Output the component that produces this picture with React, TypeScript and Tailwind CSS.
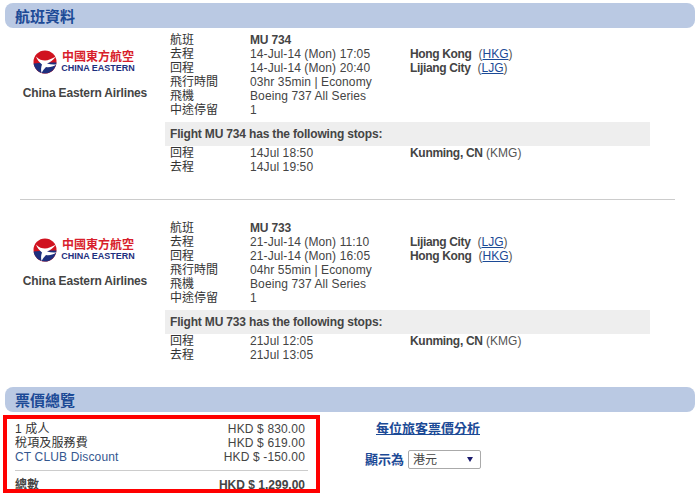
const font = "font-['Liberation_Sans','Noto_Sans_CJK_TC',sans-serif]";

function Header({ title }: { title: string }) {
  return (
    <div className="mx-[5px] h-[25px] w-[690px] rounded-[8px] bg-[#bac9e3] pl-[10px] text-[15px] leading-[28px] font-bold text-[#1c4a96]">
      {title}
    </div>
  );
}

function Logo() {
  return (
    <div className="flex items-center pl-[13px]">
      <svg width="24" height="24" viewBox="0 0 24 24" className="shrink-0">
        <circle cx="12" cy="12" r="11.5" fill="#d0121f" />
        <path d="M0.6 13.5 C1.5 19.5 6.5 23.5 12 23.5 C17.5 23.5 22.5 19.5 23.5 12.5 L12 12.5Z" fill="#1d2f7e" />
        <path d="M3 6.5 C6 9.5 9 10.5 12 10.5 C15 10.5 19 8.5 23 6.5 C20 10 17 12.5 14 13.5 C17 14.5 20 14.8 23.4 14.5 C20 17 16 17.5 13 17 C11 19 9.5 21 8.5 23 C7.8 20 8 17 9 14.5 C6.5 12.5 4 9.5 3 6.5Z" fill="#fff" />
      </svg>
      <div className="ml-[5px] flex w-[72px] flex-col items-center">
        <div className="text-[12px] leading-[12px] font-bold whitespace-nowrap text-[#d81e2c]">中國東方航空</div>
        <div className="text-[9px] leading-[11px] font-bold whitespace-nowrap text-[#1d2f7e]">CHINA EASTERN</div>
      </div>
    </div>
  );
}

function Row({ label, value, right, bold }: { label: string; value: string; right?: React.ReactNode; bold?: boolean }) {
  return (
    <div className="flex h-[14px] leading-[14px]">
      <div className="w-[80px] text-[#333]">{label}</div>
      <div className={`w-[160px] whitespace-nowrap ${bold ? "font-bold tracking-[-0.15px]" : "tracking-[0.1px]"}`}>{value}</div>
      <div className="whitespace-nowrap">{right}</div>
    </div>
  );
}

function City({ name, code }: { name: string; code: string }) {
  return (
    <>
      <span className="font-bold tracking-[-0.35px]">{name}</span>
      <span className="ml-[7px] text-[#555]">
        (<a className="text-[#1c4a96] underline">{code}</a>)
      </span>
    </>
  );
}

function Flight({ no, dep, arr, a, b, dur, stopIn, stopOut }: { no: string; dep: string; arr: string; a: React.ReactNode; b: React.ReactNode; dur: string; stopIn: string; stopOut: string }) {
  return (
    <div className="flex">
      <div className="w-[165px] pl-[20px] pt-[17px]">
        <div className="w-[130px]">
          <Logo />
          <div className="mt-[12px] text-center leading-[14px] font-bold tracking-[-0.15px] whitespace-nowrap">China Eastern Airlines</div>
        </div>
      </div>
      <div className="w-[485px]">
        <div className="pl-[5px]">
          <Row label="航班" value={no} bold />
          <Row label="去程" value={dep} right={a} />
          <Row label="回程" value={arr} right={b} />
          <Row label="飛行時間" value={dur} />
          <Row label="飛機" value="Boeing 737 All Series" />
          <Row label="中途停留" value="1" />
        </div>
        <div className="mt-[5px] h-[24px] bg-[#eeeeee] pl-[5px] leading-[24px] font-bold tracking-[-0.17px]">
          Flight {no} has the following stops:
        </div>
        <div className="pl-[5px]">
          <Row label="回程" value={stopIn} right={<><span className="font-bold tracking-[-0.3px]">Kunming, CN</span> <span className="text-[#555]">(KMG)</span></>} />
          <Row label="去程" value={stopOut} />
        </div>
      </div>
    </div>
  );
}

function Price({ label, value, blue }: { label: string; value: string; blue?: boolean }) {
  return (
    <div className="flex h-[14px] justify-between pr-[3px] leading-[14px] tracking-[0.15px]">
      <span className={blue ? "text-[#34578f]" : "text-[#333]"}>{label}</span>
      <span>{value}</span>
    </div>
  );
}

export default function App() {
  return (
    <div className={`${font} h-[495px] w-[698px] overflow-hidden bg-white pt-[3px] text-[12px] text-[#444]`}>
      <Header title="航班資料" />
      <div className="pt-[5px]">
        <Flight no="MU 734" dep="14-Jul-14 (Mon) 17:05" arr="14-Jul-14 (Mon) 20:40" a={<City name="Hong Kong" code="HKG" />} b={<City name="Lijiang City" code="LJG" />} dur="03hr 35min | Economy" stopIn="14Jul 18:50" stopOut="14Jul 19:50" />
      </div>
      <div className="mx-[20px] mt-[25px] mb-[21px] h-px w-[655px] bg-[#cccccc]" />
      <Flight no="MU 733" dep="21-Jul-14 (Mon) 11:10" arr="21-Jul-14 (Mon) 16:05" a={<City name="Lijiang City" code="LJG" />} b={<City name="Hong Kong" code="HKG" />} dur="04hr 55min | Economy" stopIn="21Jul 12:05" stopOut="21Jul 13:05" />
      <div className="mt-[25px]">
        <Header title="票價總覽" />
      </div>
      <div className="flex pt-[3px] pl-[3px]">
        <div className="h-[78px] w-[317px] overflow-hidden border-[4px] border-[#ff0000] px-[8px] pt-[3px]">
          <Price label="1 成人" value="HKD $ 830.00" />
          <Price label="稅項及服務費" value="HKD $ 619.00" />
          <Price label="CT CLUB Discount" value="HKD $ -150.00" blue />
          <div className="mt-[6px] mb-[7px] h-px bg-[#cccccc]" />
          <div className="flex h-[14px] justify-between pr-[3px] leading-[14px] font-bold">
            <span>總數</span>
            <span>HKD $ 1,299.00</span>
          </div>
        </div>
        <div className="ml-[46px] flex w-[115px] flex-col items-end pt-[6px] font-bold text-[#1c4a96]">
          <a className="mr-[1px] text-[13px] leading-[16px] whitespace-nowrap underline">每位旅客票價分析</a>
          <div className="mt-[13px] flex items-center gap-[4px] text-[13px] whitespace-nowrap">
            <span>顯示為</span>
            <div className="flex h-[19px] w-[73px] items-center justify-between rounded-[2px] border border-[#aaaaaa] pr-[7px] pl-[4px] text-[12px] font-normal text-[#444]">
              <span>港元</span>
              <span className="h-0 w-0 border-x-[3px] border-t-[5px] border-x-transparent border-t-[#1a1a6e]" />
            </div>
          </div>
        </div>
      </div>
    </div>
  );
}
